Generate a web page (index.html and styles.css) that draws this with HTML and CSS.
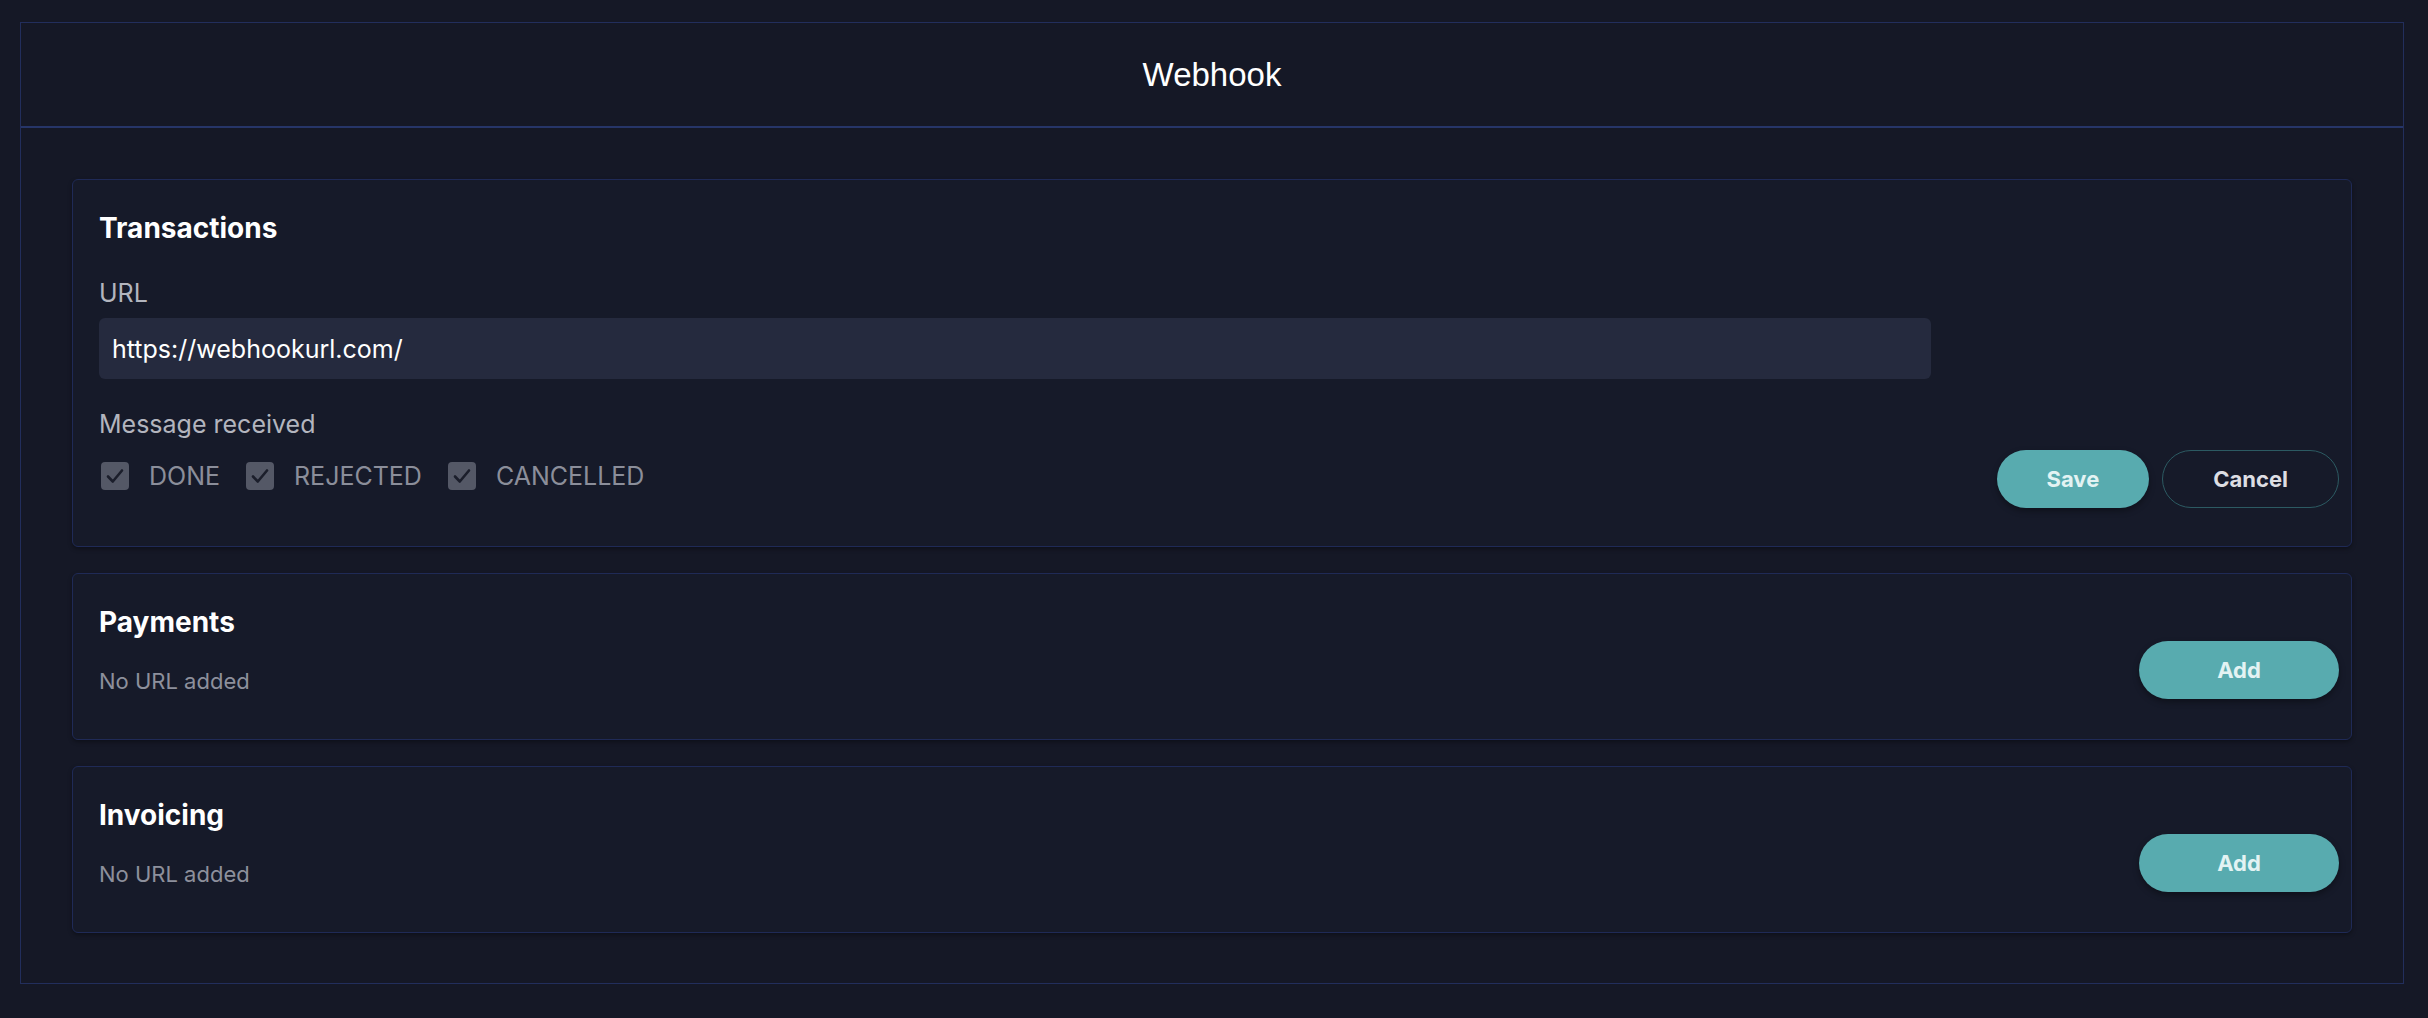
FILE: index.html
```html
<!DOCTYPE html>
<html lang="en">
<head>
<meta charset="utf-8">
<title>Webhook</title>
<link rel="stylesheet" href="styles.css">
</head>
<body>
<div class="modal">
  <header class="modal-header">
    <h1 class="modal-title">Webhook</h1>
  </header>
  <div class="modal-body">
    <section class="panel panel-form">
      <div class="panel-main">
        <h2 class="panel-title">Transactions</h2>
        <div class="field-label">URL</div>
        <div class="field-input">https://webhookurl.com/</div>
        <div class="field-label field-label-msg">Message received</div>
        <div class="checks">
          <label class="check">
            <span class="box"><svg viewBox="0 0 28 28" width="28" height="28"><path d="M7 14.5 L11.8 19.5 L21 8.5" fill="none" stroke="#1b1e2b" stroke-width="2.6" stroke-linecap="round" stroke-linejoin="round"/></svg></span>
            <span class="check-text">DONE</span>
          </label>
          <label class="check">
            <span class="box"><svg viewBox="0 0 28 28" width="28" height="28"><path d="M7 14.5 L11.8 19.5 L21 8.5" fill="none" stroke="#1b1e2b" stroke-width="2.6" stroke-linecap="round" stroke-linejoin="round"/></svg></span>
            <span class="check-text">REJECTED</span>
          </label>
          <label class="check">
            <span class="box"><svg viewBox="0 0 28 28" width="28" height="28"><path d="M7 14.5 L11.8 19.5 L21 8.5" fill="none" stroke="#1b1e2b" stroke-width="2.6" stroke-linecap="round" stroke-linejoin="round"/></svg></span>
            <span class="check-text">CANCELLED</span>
          </label>
        </div>
      </div>
      <div class="panel-actions">
        <button class="btn btn-primary">Save</button>
        <button class="btn btn-outline">Cancel</button>
      </div>
    </section>

    <section class="panel">
      <div class="panel-main">
        <h2 class="panel-title">Payments</h2>
        <div class="empty">No URL added</div>
      </div>
      <div class="panel-actions">
        <button class="btn btn-primary btn-add">Add</button>
      </div>
    </section>

    <section class="panel">
      <div class="panel-main">
        <h2 class="panel-title">Invoicing</h2>
        <div class="empty">No URL added</div>
      </div>
      <div class="panel-actions">
        <button class="btn btn-primary btn-add">Add</button>
      </div>
    </section>
  </div>
</div>
</body>
</html>
```
FILE: styles.css
```css
* { box-sizing: border-box; }

html, body {
  margin: 0;
  padding: 0;
  background: #151826;
}

body {
  font-family: Inter, "Noto Sans", sans-serif;
  color: #ffffff;
  padding: 22px 24px 0 20px;
  min-height: 1018px;
}

.modal {
  border: 1px solid #222e5c;
  background: #151826;
}

.modal-header {
  height: 105px;
  border-bottom: 2px solid #263568;
  display: flex;
  align-items: center;
  justify-content: center;
}

.modal-title {
  margin: 0;
  font-family: "Liberation Sans", Arial, sans-serif;
  font-weight: 400;
  font-size: 33px;
  line-height: 40px;
  color: #ffffff;
}

.modal-body {
  padding: 51px 51px 50px 51px;
  display: flex;
  flex-direction: column;
  gap: 26px;
}

.panel {
  display: flex;
  align-items: flex-end;
  border: 1px solid #1f2a56;
  border-radius: 6px;
  background: #161a29;
  box-shadow: 0 2px 4px rgba(0, 0, 0, 0.35);
  padding: 30px 12px 40px 26px;
}

.panel-form {
  padding-bottom: 38px;
}

.panel-main {
  flex: 1;
  align-self: flex-start;
}

.panel-title {
  margin: 0;
  font-size: 28px;
  font-weight: 700;
  line-height: 36px;
  color: #ffffff;
}

.field-label {
  margin-top: 29px;
  font-size: 25px;
  line-height: 36px;
  color: #b3b5be;
}

.field-label-msg {
  margin-top: 27px;
}

.field-input {
  margin-top: 7px;
  width: 1832px;
  height: 61px;
  background: #252a3e;
  border-radius: 6px;
  padding: 0 13px;
  display: flex;
  align-items: center;
  font-size: 25px;
  color: #ffffff;
}

.checks {
  margin-top: 16px;
  margin-bottom: 14px;
  height: 36px;
  display: flex;
  align-items: center;
  gap: 26px;
  padding-left: 2px;
}

.check {
  display: flex;
  align-items: center;
  gap: 20px;
}

.box {
  width: 28px;
  height: 28px;
  border-radius: 4px;
  background: #545866;
  display: block;
}

.box svg { display: block; }

.check-text {
  font-size: 25px;
  line-height: 36px;
  color: #8b8e9a;
}

.empty {
  margin-top: 26px;
  margin-bottom: 3px;
  font-size: 22px;
  line-height: 30px;
  color: #8d909c;
}

.panel-actions {
  display: flex;
  gap: 13px;
}

.btn {
  height: 58px;
  border-radius: 29px;
  padding: 0 50px;
  font-family: Inter, "Noto Sans", sans-serif;
  font-size: 22px;
  font-weight: 700;
  cursor: pointer;
}

.btn-primary {
  background: #58abaf;
  border: none;
  color: #e3f3f3;
  box-shadow: 0 3px 6px rgba(0, 0, 0, 0.35);
}

.btn-outline {
  background: transparent;
  border: 1px solid #2c5a62;
  color: #dddee3;
}

.btn-add {
  width: 200px;
  padding: 0;
}
```
